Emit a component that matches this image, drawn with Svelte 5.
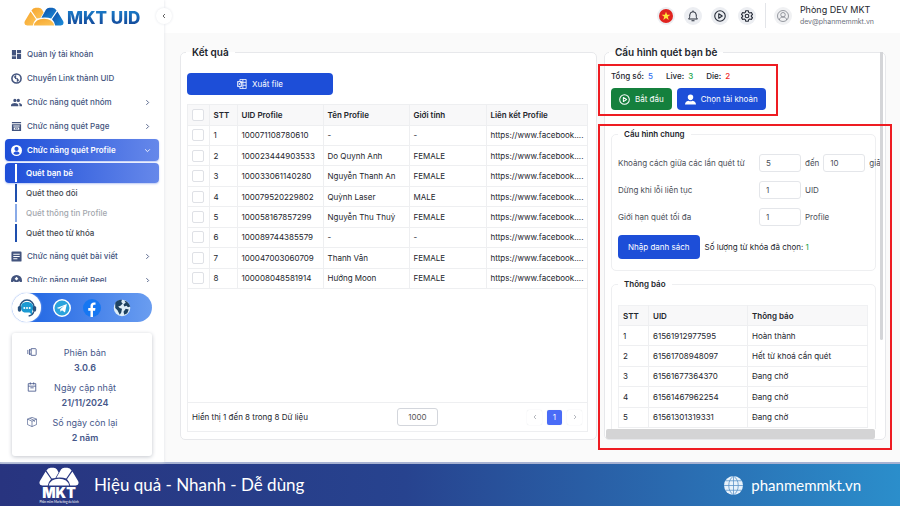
<script>
  const menuTop = [
    { label: 'Quản lý tài khoản', icon: 'grid' },
    { label: 'Chuyển Link thành UID', icon: 'convert' },
    { label: 'Chức năng quét nhóm', icon: 'group', arrow: true },
    { label: 'Chức năng quét Page', icon: 'page', arrow: true }
  ];
  const subMenu = [
    { label: 'Quét bạn bè', state: 'current' },
    { label: 'Quét theo dõi', state: '' },
    { label: 'Quét thông tin Profile', state: 'muted' },
    { label: 'Quét theo từ khóa', state: '' }
  ];
  const menuBottom = [
    { label: 'Chức năng quét bài viết', icon: 'post', arrow: true },
    { label: 'Chức năng quét Reel', icon: 'reel', arrow: true }
  ];
  const info = [
    { icon: 'version', label: 'Phiên bản', value: '3.0.6' },
    { icon: 'calendar', label: 'Ngày cập nhật', value: '21/11/2024' },
    { icon: 'box', label: 'Số ngày còn lại', value: '2 năm' }
  ];
  const link = 'https://www.facebook....';
  const results = [
    ['100071108780610', '-', '-'],
    ['100023444903533', 'Do Quynh Anh', 'FEMALE'],
    ['100033061140280', 'Nguyễn Thanh An', 'FEMALE'],
    ['100079520229802', 'Quỳnh Laser', 'MALE'],
    ['100058167857299', 'Nguyễn Thu Thuỷ', 'FEMALE'],
    ['100089744385579', '-', '-'],
    ['100047003060709', 'Thanh Vân', 'FEMALE'],
    ['100008048581914', 'Hướng Moon', 'FEMALE']
  ];
  const notices = [
    ['61561912977595', 'Hoàn thành'],
    ['61561708948097', 'Hết từ khoá cần quét'],
    ['61561677364370', 'Đang chờ'],
    ['61561467962254', 'Đang chờ'],
    ['61561301319331', 'Đang chờ']
  ];
  let perPage = $state('1000');
  let from = $state('5');
  let to = $state('10');
  let maxErrors = $state('1');
  let limit = $state('1');
</script>

{#snippet petals(left, right)}
  <path fill={left} d="M6.6 4.6 12 12.2Q9.6 14.4 8.8 18.6H3.2Q-.6 18 .8 14.2Z" />
  <path fill={left} d="M7.4 3.4Q9 .8 11.6.8H14.6Q16.8.8 18 2.6L19.6 5.4 16.4 11Q14.6 11 12.8 11.6Z" />
  <path fill={right} d="M33.4 4.6 28 12.2Q30.4 14.4 31.2 18.6H36.8Q40.6 18 39.2 14.2Z" />
  <path fill={right} d="M32.6 3.4Q31 .8 28.4.8H25.4Q23.2.8 22 2.6L17.4 10.8Q23 10 27.2 11.6Z" />
  <path fill={left} d="M9.8 18.6Q11.4 11.8 20 11.8 28.600 11.8 30.2 18.6Z" />
{/snippet}

{#snippet icon(name)}
  <svg class="icon" viewBox="0 0 24 24" aria-hidden="true">
    {#if name === 'grid'}
      <path fill="currentColor" d="M2 2h9v12H2zM13 2h9v7h-9zM13 11h9v11h-9zM2 16h9v6H2z" />
    {:else if name === 'convert'}
      <circle cx="12" cy="12" r="10" fill="none" stroke="currentColor" stroke-width="3.4" />
      <path fill="none" stroke="currentColor" stroke-width="2.6" d="M6.500 9.500 10 6.500V12l4 .5v5l3.500-3" />
    {:else if name === 'group'}
      <path fill="currentColor" d="M8.500 11a3.500 3.500 0 1 0 0-7 3.500 3.500 0 0 0 0 7zm7.500 0a3.500 3.500 0 1 0 0-7 3.500 3.500 0 0 0 0 7zM8.500 13C5.500 13 0 14.500 0 17.500V20h16v-2.500C16 14.500 11 13 8.500 13zm8 0c1.500 1 2 2.700 2 4.500V20H24v-2.500c0-3-5-4.500-7.500-4.500z" />
    {:else if name === 'page'}
      <path fill="currentColor" fill-rule="evenodd" d="M2 2h20v3H2zM2 7h20v15H2zM5 10v2h14v-2zM6 14v5h12v-5zM8 18l2-3 2 2 2-2 2 3z" />
    {:else if name === 'profile'}
      <path fill="currentColor" fill-rule="evenodd" d="M12 0a12 12 0 1 0 0 24 12 12 0 0 0 0-24zm0 4a4.500 4.500 0 1 1 0 9 4.500 4.500 0 0 1 0-9zM5 18c1-3 4-4 7-4s6 1 7 4a9 9 0 0 1-14 0z" />
    {:else if name === 'post'}
      <path fill="currentColor" fill-rule="evenodd" d="M3 1h18a2 2 0 0 1 2 2v18a2 2 0 0 1-2 2H3a2 2 0 0 1-2-2V3a2 2 0 0 1 2-2zm2 5v2h14V6zm0 5v2h14v-2zm0 5v2h9v-2z" />
    {:else if name === 'reel'}
      <path fill="currentColor" fill-rule="evenodd" d="M12 0a12 12 0 1 0 0 24 12 12 0 0 0 0-24zm0 4 4 4-4 4-4-4zm-6 9 4 4-2 2-4-3zm12 0-4 4 2 2 4-3z" />
    {:else if name === 'version'}
      <path fill="none" stroke="currentColor" stroke-width="2" d="M10 4h10a2 2 0 0 1 2 2v12a2 2 0 0 1-2 2H10zM6 5v14M2 7v10M6 7h4M6 17h4" />
    {:else if name === 'calendar'}
      <path fill="none" stroke="currentColor" stroke-width="2" d="M3 4h18v18H3zM3 10h18M8 1v5M16 1v5M8 14h8" />
    {:else if name === 'box'}
      <path fill="none" stroke="currentColor" stroke-width="1.6" d="M12 1 23 5v13l-11 5-11-5V5zM1 5l11 5 11-5M12 10v13M6.500 3l11 5v4" />
    {:else if name === 'chevron'}
      <path fill="none" stroke="currentColor" stroke-width="3" d="m8 4 8 8-8 8" />
    {:else if name === 'back'}
      <path fill="none" stroke="currentColor" stroke-width="3" d="m16 4-8 8 8 8" />
    {:else if name === 'down'}
      <path fill="none" stroke="currentColor" stroke-width="3" d="m4 8 8 8 8-8" />
    {:else if name === 'play'}
      <circle cx="12" cy="12" r="10.500" fill="none" stroke="currentColor" stroke-width="2.200" />
      <path fill="none" stroke="currentColor" stroke-width="2.200" stroke-linejoin="round" d="M9.500 7.500v9l7-4.500z" />
    {:else if name === 'user'}
      <path fill="currentColor" d="M12 1a6 6 0 0 1 6 6c0 3.500-2.500 6.500-6 6.500S6 10.500 6 7a6 6 0 0 1 6-6zM0 23c0-5 3-7.500 7.500-8.500 3 2 6 2 9 0C21 15.500 24 18 24 23z" />
    {:else if name === 'bell'}
      <path fill="none" stroke="currentColor" stroke-width="2" stroke-linejoin="round" d="M3 18c2.500-2 2.500-4 2.500-8a6.500 6.500 0 0 1 13 0c0 4 0 6 2.500 8zM9 21.500h6M12 1v2.500" />
    {:else if name === 'gear'}
      <path fill="none" stroke="currentColor" stroke-width="2.200" stroke-linejoin="round" d="m9.500 1.500-.8 3.200-2.200 1.300-3.200-1L1 9l2.400 2.200v1.800L1 15.200 3.300 19l3.200-1 2.200 1.300.8 3.200h5l.8-3.200 2.200-1.300 3.200 1 2.300-3.800-2.400-2.200v-1.800L23 9l-2.300-4-3.200 1-2.200-1.300-.8-3.200z" />
      <circle cx="12" cy="12" r="3.600" fill="none" stroke="currentColor" stroke-width="2.200" />
    {:else if name === 'avatar'}
      <circle cx="12" cy="12" r="11" fill="none" stroke="currentColor" stroke-width="1.500" />
      <circle cx="12" cy="9.500" r="4.500" fill="none" stroke="currentColor" stroke-width="1.500" />
      <path fill="none" stroke="currentColor" stroke-width="1.500" d="M4.500 20c1-8 14-8 15 0" />
    {:else if name === 'excel'}
      <path fill="none" stroke="currentColor" stroke-width="2" d="M7 5V1h15v22H7v-4M14 1v22M7 8h15M14 15h8" />
      <path fill="none" stroke="currentColor" stroke-width="2" d="M1 6h10v12H1zM3.500 8.500l5 7M8.500 8.500l-5 7" />
    {/if}
  </svg>
{/snippet}

{#snippet navItem(item)}
  <a class="item" href="#menu">
    {@render icon(item.icon)}
    <span>{item.label}</span>
    {#if item.arrow}<i>{@render icon('chevron')}</i>{/if}
  </a>
{/snippet}

<div class="app">
  <aside class="sidebar">
    <div class="logo">
      <svg viewBox="0 0 40 19" aria-hidden="true">
        <defs>
          <linearGradient id="gold" x2="1" y2="1"><stop stop-color="#f6a42c" /><stop offset="1" stop-color="#fcc558" /></linearGradient>
          <linearGradient id="blue" x2="1" y2="1"><stop stop-color="#0c4aa4" /><stop offset="1" stop-color="#1c8fdc" /></linearGradient>
        </defs>
        {@render petals('url(#gold)', 'url(#blue)')}
      </svg>
      <strong>MKT UID</strong>
    </div>
    <button class="collapse" aria-label="Thu gọn">{@render icon('back')}</button>

    <nav>
      {#each menuTop as item}{@render navItem(item)}{/each}
      <a class="item open" href="#menu">
        {@render icon('profile')}
        <span>Chức năng quét Profile</span>
        <i>{@render icon('down')}</i>
      </a>
      <div class="sub">
        {#each subMenu as s}
          <a href="#menu" class={s.state}><b></b>{s.label}</a>
        {/each}
      </div>
      {#each menuBottom as item}{@render navItem(item)}{/each}
    </nav>

    <div class="social">
      <a class="support" href="#support" aria-label="Hỗ trợ">
        <svg viewBox="0 0 24 24">
          <path fill="none" stroke="#28527f" stroke-width="1.800" d="M3.500 11a8.500 8.500 0 0 1 17 0M20 16c-.5 3-3 5-6 5.500" />
          <path fill="#1b9ad2" d="M6 7c3-3 9-3 12 0 2 2 2 7 0 9v4l-3-2.500H9C4.500 17 4 10 6 7z" />
          <rect x="1" y="9.500" width="4" height="7" rx="2" fill="#28527f" /><rect x="19" y="9.500" width="4" height="7" rx="2" fill="#28527f" />
          <circle cx="8.800" cy="12" r="1.200" fill="#fff" /><circle cx="12" cy="12" r="1.200" fill="#fff" /><circle cx="15.200" cy="12" r="1.200" fill="#fff" />
        </svg>
      </a>
      <a href="#telegram" aria-label="Telegram">
        <svg viewBox="0 0 24 24">
          <circle cx="12" cy="12" r="11" fill="#2ba3dc" stroke="#fff" stroke-width="2" />
          <path fill="#fff" d="M5 12 18.500 6.500 16 18l-4-3-2 2-.5-3.500L15 9l-7 4z" />
        </svg>
      </a>
      <a href="#facebook" aria-label="Facebook">
        <svg viewBox="0 0 24 24">
          <circle cx="12" cy="12" r="12" fill="#1677f2" />
          <path fill="#fff" d="M10 24v-8.500H7V12h3V9.300C10 6.200 11.800 4.500 14.600 4.500c1 0 2.100.2 2.100.2v3h-1.400c-1.500 0-2 .9-2 1.900V12h3.300l-.5 3.500h-2.800V24z" />
        </svg>
      </a>
      <a href="#web" aria-label="Website">
        <svg viewBox="0 0 24 24">
          <circle cx="12" cy="12" r="11" fill="#dfeef7" />
          <path fill="#1e4260" d="M3 5c2-3 6-4.500 9-4l-1 3 2 2-3 3-3 1 2 2 3 1-1 5-2 3-3-6-3-3zM15 2c4 1 7 4 8 8l-3 1-2-2-3 1-1-3 3-2zM17 13l4 1-2 5-4 2-1-4z" />
        </svg>
      </a>
    </div>

    <div class="card">
      {#each info as row}
        <div class="info">
          {@render icon(row.icon)}
          <p>{row.label}<b>{row.value}</b></p>
        </div>
      {/each}
    </div>
  </aside>

  <header class="topbar">
    <button class="round" aria-label="Tiếng Việt">
      <svg class="flag" viewBox="0 0 24 24">
        <circle cx="12" cy="12" r="12" fill="#e0231f" />
        <path fill="#ffe43a" d="m12 4.500 1.900 5.400h5.600l-4.500 3.400 1.700 5.500-4.700-3.300-4.700 3.300L9 13.300 4.500 9.900h5.600z" />
      </svg>
    </button>
    <button class="round" aria-label="Thông báo">{@render icon('bell')}</button>
    <button class="round" aria-label="Hướng dẫn">{@render icon('play')}</button>
    <button class="round" aria-label="Cài đặt">{@render icon('gear')}</button>
    <div class="account">
      <span class="round avatar">{@render icon('avatar')}</span>
      <p>Phòng DEV MKT<small>dev@phanmemmkt.vn</small></p>
    </div>
  </header>

  <main>
    <fieldset class="panel results">
      <legend>Kết quả</legend>
      <button class="btn export">{@render icon('excel')}Xuất file</button>
      <div class="sheet">
        <table class="result-table">
          <colgroup><col class="c-check" /><col class="c-no" /><col class="c-uid" /><col class="c-name" /><col class="c-sex" /><col /></colgroup>
          <thead>
            <tr>
              <th><input type="checkbox" aria-label="Chọn tất cả" /></th>
              <th>STT</th><th>UID Profile</th><th>Tên Profile</th><th>Giới tính</th><th>Liên kết Profile</th>
            </tr>
          </thead>
          <tbody>
            {#each results as [uid, name, sex], n}
              <tr>
                <td><input type="checkbox" aria-label={`Chọn ${uid}`} /></td>
                <td>{n + 1}</td><td>{uid}</td><td>{name}</td><td>{sex}</td><td>{link}</td>
              </tr>
            {/each}
          </tbody>
        </table>
        <div class="pager">
          <span>Hiển thị 1 đến 8 trong 8 Dữ liệu</span>
          <input type="text" aria-label="Số dòng mỗi trang" bind:value={perPage} />
          <div class="pages">
            <button aria-label="Trang trước">{@render icon('back')}</button>
            <button class="on">1</button>
            <button aria-label="Trang sau">{@render icon('chevron')}</button>
          </div>
        </div>
      </div>
    </fieldset>

    <div class="side">
      <fieldset class="panel config">
        <legend>Cấu hình quét bạn bè</legend>
        <div class="scroller">
          <div class="content">
            <div class="stats">
              <span>Tổng số: <b class="s-blue">5</b></span>
              <span>Live: <b class="s-green">3</b></span>
              <span>Die: <b class="s-red">2</b></span>
            </div>
            <div class="actions">
              <button class="btn green">{@render icon('play')}Bắt đầu</button>
              <button class="btn">{@render icon('user')}Chọn tài khoản</button>
            </div>
            <fieldset class="group">
              <legend>Cấu hình chung</legend>
              <div class="field">
                <label for="from">Khoảng cách giữa các lần quét từ</label>
                <input id="from" type="text" bind:value={from} />
                <label for="to">đến</label>
                <input id="to" type="text" bind:value={to} />
                <span>giây</span>
              </div>
              <div class="field">
                <label for="errors">Dừng khi lỗi liên tục</label>
                <input id="errors" type="text" bind:value={maxErrors} />
                <span>UID</span>
              </div>
              <div class="field">
                <label for="limit">Giới hạn quét tối đa</label>
                <input id="limit" type="text" bind:value={limit} />
                <span>Profile</span>
              </div>
              <div class="import">
                <button class="btn tall">Nhập danh sách</button>
                <span>Số lượng từ khóa đã chọn: <em>1</em></span>
              </div>
            </fieldset>
            <fieldset class="group notices">
              <legend>Thông báo</legend>
              <table class="notice-table">
                <colgroup><col class="c-no" /><col class="c-uid" /><col /></colgroup>
                <thead><tr><th>STT</th><th>UID</th><th>Thông báo</th></tr></thead>
                <tbody>
                  {#each notices as [uid, text], n}
                    <tr><td>{n + 1}</td><td>{uid}</td><td>{text}</td></tr>
                  {/each}
                </tbody>
              </table>
            </fieldset>
          </div>
          <div class="vbar"></div>
          <div class="hbar"></div>
        </div>
      </fieldset>
      <div class="mark mark-top"></div>
      <div class="mark mark-bottom"></div>
    </div>
  </main>

  <footer>
    <div class="brand">
      <svg viewBox="0 0 40 19" aria-hidden="true">{@render petals('#fff', '#fff')}</svg>
      <strong>MKT</strong>
      <small>Phần mềm Marketing đa kênh</small>
    </div>
    <span class="slogan">Hiệu quả - Nhanh - Dễ dùng</span>
    <a class="site" href="#site">
      <svg viewBox="0 0 24 24" aria-hidden="true">
        <circle cx="12" cy="12" r="12" fill="#e8f2fb" />
        <path fill="none" stroke="#5b93c8" stroke-width="1" d="M12 0v24M0 12h24M2 6h20M2 18h20M12 0c-8 5-8 19 0 24M12 0c8 5 8 19 0 24" />
      </svg>
      phanmemmkt.vn
    </a>
  </footer>
</div>

<style>
  :global(body) { margin: 0; }
  .app, .app * { box-sizing: border-box; }
  .app {
    display: grid;
    grid-template: 33px minmax(0, 1fr) 44px / 164px minmax(0, 1fr);
    height: 100vh;
    overflow: hidden;
    background: #fafafa;
    color: #23262d;
    font: 8px/12px Inter, "Liberation Sans", sans-serif;
  }
  p { margin: 0; }
  a { color: inherit; text-decoration: none; }
  button, input { font: inherit; color: inherit; }
  button { padding: 0; border: 0; background: none; cursor: pointer; }
  .icon { display: block; width: 10px; height: 10px; flex: none; }

  .sidebar {
    position: relative;
    grid-row: 1 / 3;
    display: flex;
    flex-direction: column;
    padding-bottom: 6px;
    background: #fff;
    box-shadow: 0 0 3px #dfe1e6;
  }
  .logo { display: flex; align-items: center; gap: 3px; height: 43px; padding: 0 0 10px 24px; }
  .logo svg { width: 40px; height: 19px; }
  .logo strong {
    padding-top: 2px;
    font: 800 17px/20px Inter, sans-serif;
    color: transparent;
    background: linear-gradient(#1d8ad6, #123f90);
    background-clip: text;
  }
  .collapse {
    position: absolute;
    top: 8px;
    right: -8px;
    z-index: 2;
    display: grid;
    place-items: center;
    width: 16px;
    height: 16px;
    border-radius: 50%;
    background: #fff;
    color: #333;
    box-shadow: 0 0 3px #e3e5ea;
  }
  .collapse .icon { width: 6px; height: 6px; }
  nav { flex: 1; min-height: 0; overflow: hidden; padding: 0 5px; color: #43547e; font-weight: 500; }
  .item {
    display: flex;
    align-items: center;
    gap: 5px;
    height: 22px;
    margin-bottom: 2px;
    padding: 0 8px 0 6px;
    border-radius: 4px;
  }
  .item i { margin-left: auto; }
  .item i .icon { width: 7px; height: 7px; }
  .item > .icon { width: 11px; height: 11px; }
  .open, .sub .current { background: linear-gradient(90deg, #1d4ed8, #6688ea); color: #fff; box-shadow: 0 1px 2px #b9c8f5; }
  .open, .sub .current { font-weight: 600; }
  .sub { margin-bottom: 2px; color: #43474f; }
  .sub a { display: flex; align-items: center; height: 20px; gap: 9px; padding-left: 10px; border-radius: 4px; }
  .sub b { width: 2px; height: 18px; background: #1e4fae; }
  .sub .current b { background: #fff; }
  .sub .muted { color: #a3a7ae; }
  .sub .muted b { background: #8aabe8; }

  .social {
    display: flex;
    align-items: center;
    gap: 12px;
    height: 29px;
    margin: 11px 12px 0;
    border-radius: 15px;
    background: linear-gradient(90deg, #1860e2, #6a9df0);
  }
  .social svg { display: block; width: 18px; height: 18px; }
  .social .support { display: grid; place-items: center; width: 29px; height: 29px; border-radius: 50%; background: #fff; box-shadow: 0 0 2px #b8cdf5; }
  .social .support svg { width: 20px; height: 20px; }
  .card {
    display: flex;
    flex-direction: column;
    gap: 5px;
    margin: 11px 12px 0;
    padding: 12px 15px 11px;
    border-radius: 3px;
    background: #fff;
    box-shadow: 0 1px 4px #c3c6cd;
    color: #46578a;
    font-size: 9px;
    line-height: 15px;
    text-align: center;
  }
  .info { display: grid; grid-template-columns: 10px 1fr 4px; }
  .info .icon { margin-top: 2px; }
  .info b { display: block; font-weight: 600; }

  .topbar { display: flex; align-items: center; justify-content: flex-end; gap: 9px; padding: 0 26px 2px 0; background: #fff; }
  .round { display: grid; place-items: center; width: 18px; height: 18px; border-radius: 50%; background: #eceef2; color: #262c38; }
  .round .icon { width: 12px; height: 12px; }
  .round .flag { width: 14px; height: 14px; }
  .account { display: flex; align-items: center; gap: 8px; height: 25px; padding-left: 8px; border-left: 1px solid #e3e5e9; font-size: 9px; }
  .account .avatar { color: #777b84; background: #f0f1f3; }
  .account small { display: block; color: #6c717c; font-size: 7px; line-height: 12px; }

  main { display: flex; gap: 7px; min-height: 0; padding: 13px 14px 22px 16px; }
  fieldset { min-width: 0; min-height: 0; margin: 0; border: 1px solid #e7e8eb; border-radius: 5px; background: #fff; }
  .panel > legend { margin-left: 4px; padding: 0 6px; font-size: 10px; line-height: 12px; font-weight: 600; }
  .results { flex: 1; display: flex; flex-direction: column; align-items: flex-start; padding: 15px 8px 7px 6px; }
  .results > legend { margin-left: -1px; }
  .btn {
    display: flex;
    align-items: center;
    justify-content: center;
    gap: 5px;
    height: 22px;
    padding: 0 8px;
    border-radius: 4px;
    background: #1d4ed8;
    color: #fff;
  }
  .export { width: 146px; flex: none; }
  .sheet { flex: 1; align-self: stretch; display: flex; flex-direction: column; min-height: 0; margin-top: 9px; border: 1px solid #eeeff1; }
  table { width: 100%; border-collapse: collapse; table-layout: fixed; }
  th, td { padding: 0 4px; border: 0 solid #eeeff1; border-width: 0 1px 1px 0; text-align: left; white-space: nowrap; overflow: hidden; }
  th { height: 20px; background: #f8f8f9; font-weight: 600; }
  td { height: 20px; }
  th:last-child, td:last-child { border-right: 0; }
  .result-table { height: 184px; }
  .result-table .c-check { width: 21px; }
  .result-table .c-no { width: 28px; }
  .result-table .c-uid, .result-table .c-name { width: 86px; }
  .result-table .c-sex { width: 77px; }
  input[type='checkbox'] {
    display: block;
    appearance: none;
    width: 12px;
    height: 12px;
    margin: 0;
    border: 1px solid #dfe1e6;
    border-radius: 2px;
    background: #fff;
  }
  .pager { display: flex; align-items: center; justify-content: space-between; height: 29px; margin-top: auto; padding: 0 5px 0 4px; border-top: 1px solid #eeeff1; }
  input[type='text'] { height: 18px; border: 1px solid #e4e6ea; border-radius: 3px; background: #fff; padding: 0 6px; outline: 0; }
  .pager input[type='text'] { width: 41px; border-color: #d3d6dc; text-align: center; color: #555; }
  .pages { display: flex; gap: 5px; }
  .pages button { display: grid; place-items: center; width: 15px; height: 15px; border-radius: 2px; color: #9da1a9; box-shadow: 0 0 1px #d5d7dc; }
  .pages .icon { width: 6px; height: 6px; }
  .pages .on { background: #4a6cf7; color: #fff; }

  .side { position: relative; display: flex; flex: none; width: 282px; }
  .config { flex: 1; display: flex; padding: 0 2px 0 0; }
  .scroller { flex: 1; display: grid; grid-template: minmax(0, 1fr) 10px / minmax(0, 1fr) 3px; min-height: 0; }
  .content { overflow: hidden; padding: 13px 4px 0 6px; }
  .vbar { width: 3px; height: 288px; margin-top: -6px; background: #d4d5d8; border-radius: 0 0 2px 2px; }
  .hbar { margin: 0 5px 0 1px; background: #d4d4d5; border-radius: 2px; }
  .stats { display: flex; gap: 13px; line-height: 10px; font-weight: 500; }
  .stats b { margin-left: 2px; font-weight: 500; }
  .s-blue { color: #2f6df0; }
  .s-green, em { color: #16a34a; font-style: normal; }
  .s-red { color: #ef2b2b; }
  .actions { display: flex; gap: 5px; margin: 7px 0 18px; }
  .actions .icon { width: 11px; height: 11px; }
  .green { background: #15803d; }
  .group { padding: 14px 6px 11px; border-color: #eeeff1; }
  .group > legend { padding: 0 6px; font-weight: 600; }
  .field { display: flex; align-items: center; gap: 4px; margin-bottom: 9px; white-space: nowrap; color: #4a4e57; }
  .field label:first-child { width: 137px; flex: none; }
  .field input[type='text'] { width: 42px; flex: none; }
  .import { display: flex; align-items: center; gap: 5px; }
  .tall { height: 24px; padding: 0 10px; }
  .notices { margin-top: 7px; padding-top: 15px; padding-right: 7px; }
  .notice-table { height: 123px; border: 1px solid #f0f1f3; }
  .notice-table .c-no { width: 30px; }
  .notice-table .c-uid { width: 99px; }
  .mark { position: absolute; left: -6px; border: 2px solid #ee1c22; pointer-events: none; }
  .mark-top { top: 18px; width: 180px; height: 52px; }
  .mark-bottom { top: 78px; right: -6px; bottom: -10px; }

  footer {
    grid-column: 1 / 3;
    display: flex;
    align-items: center;
    padding: 0 39px 0 38px;
    border-top: 2px solid #a7b2d2;
    background: linear-gradient(90deg, #28347f, #27438f 45%, #2a6bb0 75%, #2b8ecb);
    color: #fff;
    font-family: Lato, sans-serif;
  }
  .brand { display: flex; flex-direction: column; align-items: center; width: 42px; margin-right: 14px; }
  .brand svg { width: 40px; height: 19px; }
  .brand strong { font: 900 14px/14px Inter, sans-serif; }
  .brand small { font-size: 3px; line-height: 4px; white-space: nowrap; }
  .slogan { font-size: 17px; line-height: 20px; }
  .site { display: flex; align-items: center; gap: 8px; margin-left: auto; font-size: 15px; line-height: 18px; }
  .site svg { width: 19px; height: 19px; }
</style>
